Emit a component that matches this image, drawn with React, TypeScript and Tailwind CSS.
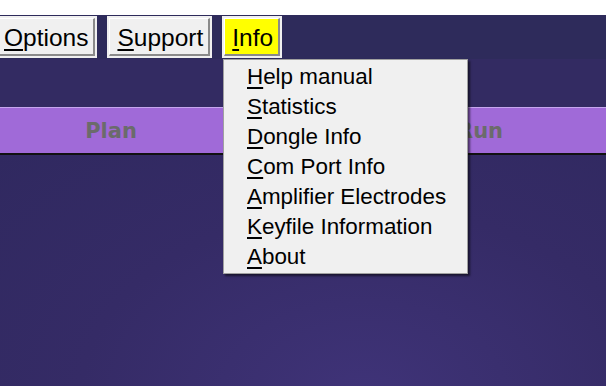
import React from "react";

const menuItems = [
  { key: "H", rest: "elp manual" },
  { key: "S", rest: "tatistics" },
  { key: "D", rest: "ongle Info" },
  { key: "C", rest: "om Port Info" },
  { key: "A", rest: "mplifier Electrodes" },
  { key: "K", rest: "eyfile Information" },
  { key: "A", rest: "bout" },
];

function MenuButton({ first, rest, active }: { first: string; rest: string; active?: boolean }) {
  return (
    <div className="bg-[#f0f0f0] p-[2px] h-[42px] flex">
      <div
        className={
          "flex items-center pl-[7px] pr-[5px] pt-[4px] border-t border-l border-t-white border-l-white border-b-2 border-r-2 border-b-[#8a8a8a] border-r-[#8a8a8a] " +
          (active ? "bg-[#ffff00]" : "bg-[#f0f0f0]")
        }
      >
        <span className="text-[24.5px] leading-none text-black whitespace-nowrap">
          <span className="underline decoration-[2px] underline-offset-[3px]">{first}</span>
          {rest}
        </span>
      </div>
    </div>
  );
}

export default function App() {
  return (
    <div
      className="relative w-[606px] h-[386px] overflow-hidden bg-white"
      style={{ fontFamily: '"Liberation Sans", Arial, sans-serif' }}
    >
      <div className="mt-[15px] h-[44px] bg-[#2e2b5b] flex items-start gap-[10px] pt-[1px] ml-[-6px]">
        <MenuButton first="O" rest="ptions" />
        <MenuButton first="S" rest="upport" />
        <MenuButton first="I" rest="nfo" active />
      </div>

      <div className="h-[48px] bg-[#332b62]" />

      <div className="h-[46px] bg-[#a06ad8] border-t border-t-[#c6a6ee] flex items-center relative pt-[3px]">
        <div
          className="w-[222px] text-center text-[21px] font-bold text-[#6b6b6b]"
          style={{ fontFamily: '"DejaVu Sans", Verdana, sans-serif' }}
        >
          Plan
        </div>
        <div
          className="absolute left-[457px] text-[21px] font-bold text-[#6b6b6b]"
          style={{ fontFamily: '"DejaVu Sans", Verdana, sans-serif' }}
        >
          Run
        </div>
      </div>
      <div className="h-[2px] bg-[#111111]" />

      <div className="h-[240px] bg-[radial-gradient(ellipse_at_60%_100%,#3f3378_0%,#352b66_55%,#302960_100%)]" />

      <div className="absolute left-[223px] top-[59px] w-[245px] bg-[#f0f0f0] border border-[#a0a0a0] shadow-[2px_2px_2px_rgba(0,0,0,0.55)] pt-[2px] pb-[1px] pl-[23px]">
        {menuItems.map((item, i) => (
          <div key={i} className="h-[30px] leading-[30px] text-[22.4px] text-black whitespace-nowrap">
            <span className="underline decoration-[2px] underline-offset-[3px]">{item.key}</span>
            {item.rest}
          </div>
        ))}
      </div>
    </div>
  );
}
